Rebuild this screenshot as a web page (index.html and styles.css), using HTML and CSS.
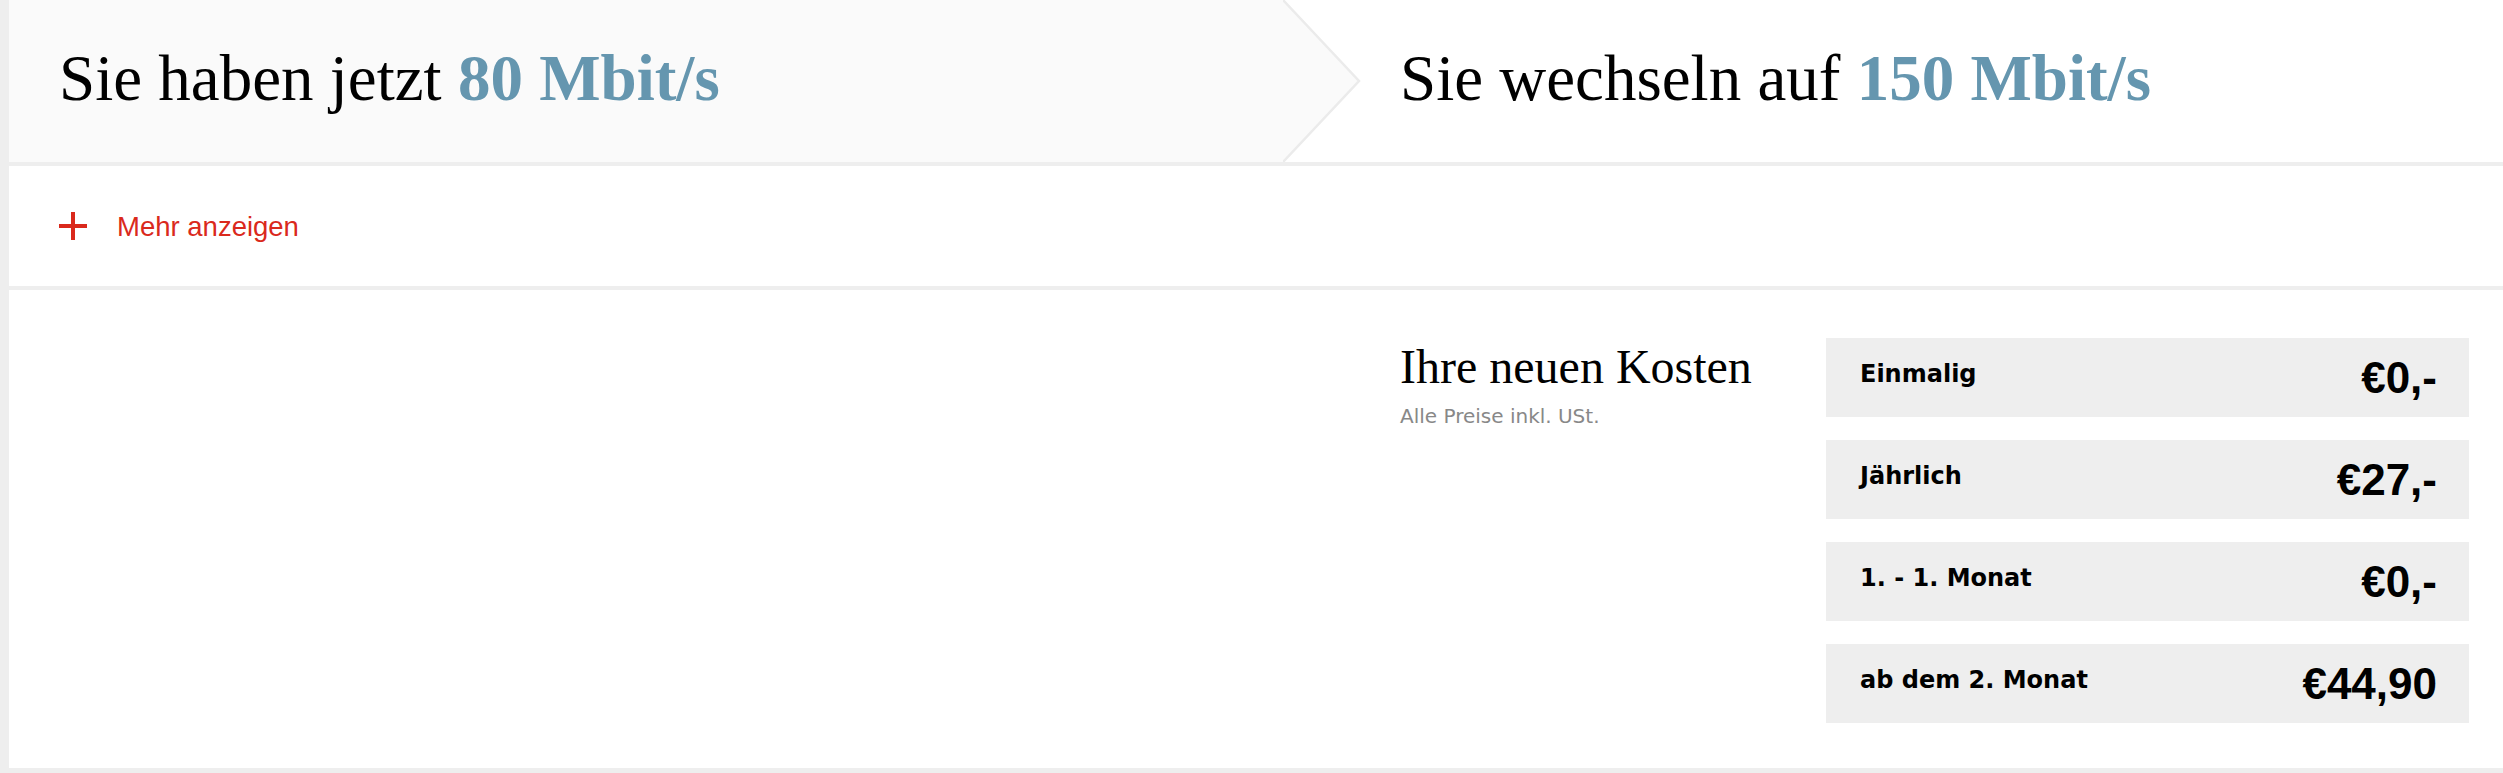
FILE: index.html
```html
<!DOCTYPE html>
<html lang="de">
<head>
    <meta charset="UTF-8">
    <meta name="viewport" content="width=device-width, initial-scale=1.0">
    <title>Tarifwechsel</title>
    <link rel="stylesheet" href="styles.css">
</head>
<body>

<div class="page">
    <header class="compare">
        <div class="compare-current">
            <h2 class="compare-title">Sie haben jetzt <strong>80 Mbit/s</strong></h2>
        </div>
        <svg class="compare-arrow" width="78" height="162" viewBox="0 0 78 162">
            <polygon points="0,0 76,81 0,162" fill="#fafafa"/>
            <polyline points="0,0 76,81 0,162" fill="none" stroke="#ebebeb" stroke-width="2.5"/>
        </svg>
        <div class="compare-target">
            <h2 class="compare-title">Sie wechseln auf <strong>150 Mbit/s</strong></h2>
        </div>
    </header>

    <div class="more">
        <button type="button" class="more-toggle">
            <svg width="28" height="28" viewBox="0 0 28 28">
                <rect x="12" y="0" width="4" height="28" fill="#da291c"/>
                <rect x="0" y="12" width="28" height="4" fill="#da291c"/>
            </svg>
            Mehr anzeigen
        </button>
    </div>

    <section class="costs">
        <div class="costs-intro">
            <h3>Ihre neuen Kosten</h3>
            <p>Alle Preise inkl. USt.</p>
        </div>
        <ul class="costs-list">
            <li class="costs-row"><span class="costs-label">Einmalig</span><span class="costs-price">€0,-</span></li>
            <li class="costs-row"><span class="costs-label">Jährlich</span><span class="costs-price">€27,-</span></li>
            <li class="costs-row"><span class="costs-label">1. - 1. Monat</span><span class="costs-price">€0,-</span></li>
            <li class="costs-row"><span class="costs-label">ab dem 2. Monat</span><span class="costs-price">€44,90</span></li>
        </ul>
    </section>
</div>

</body>
</html>
```

FILE: styles.css
```css
body {
    margin: 0;
    min-height: 100vh;
    background-color: #eeeeee;
    font-family: "DejaVu Sans", sans-serif;
    color: #000;
}

.page {
    margin-left: 9px;
    display: flex;
    flex-direction: column;
    gap: 4px;
}

/* Kopfzeile: aktueller Tarif -> neuer Tarif */
.compare {
    display: flex;
    height: 162px;
    background: white;
}

.compare-current {
    width: 1274px;
    background-color: #fafafa;
    padding-left: 50px;
    box-sizing: border-box;
    display: flex;
    align-items: center;
    padding-bottom: 5px;
}

.compare-arrow {
    flex: none;
    display: block;
}

.compare-target {
    flex: 1;
    padding-left: 39px;
    display: flex;
    align-items: center;
    padding-bottom: 5px;
}

.compare-title {
    margin: 0;
    font-family: "Liberation Serif", serif;
    font-weight: normal;
    font-size: 65px;
    line-height: 1;
    white-space: nowrap;
}

.compare-title strong {
    color: #6596af;
    font-weight: bold;
}

/* Mehr anzeigen */
.more {
    height: 120px;
    background: white;
    display: flex;
    align-items: center;
    padding-left: 50px;
}

.more-toggle {
    display: flex;
    align-items: center;
    gap: 30px;
    padding: 2px 0 0;
    border: none;
    background: none;
    color: #da291c;
    font-family: "Liberation Sans", Arial, sans-serif;
    font-size: 27.5px;
    cursor: pointer;
}

.more-toggle svg {
    display: block;
    margin-top: -2px;
}

/* Kosten */
.costs {
    display: grid;
    grid-template-columns: 1352px 465px 1fr;
    padding: 48px 34px 45px 0;
    background: white;
}

.costs-intro {
    grid-column: 2;
    padding-left: 39px;
}

.costs-intro h3 {
    margin: 5px 0 0;
    font-family: "Liberation Serif", serif;
    font-weight: normal;
    font-size: 48px;
    line-height: 1;
}

.costs-intro p {
    margin: 13px 0 0;
    font-size: 20px;
    line-height: 24px;
    color: #888888;
}

.costs-list {
    grid-column: 3;
    list-style: none;
    margin: 0;
    padding: 0;
    display: flex;
    flex-direction: column;
    gap: 23px;
}

.costs-row {
    height: 79px;
    background-color: #eeeeee;
    display: flex;
    justify-content: space-between;
    align-items: flex-start;
    padding: 0 32px 0 34px;
}

.costs-label {
    margin-top: 24px;
    font-size: 24px;
    font-weight: bold;
    line-height: 1;
}

.costs-price {
    margin-top: 18px;
    font-family: "Liberation Sans", Arial, sans-serif;
    font-size: 44px;
    font-weight: bold;
    line-height: 1;
}
```
